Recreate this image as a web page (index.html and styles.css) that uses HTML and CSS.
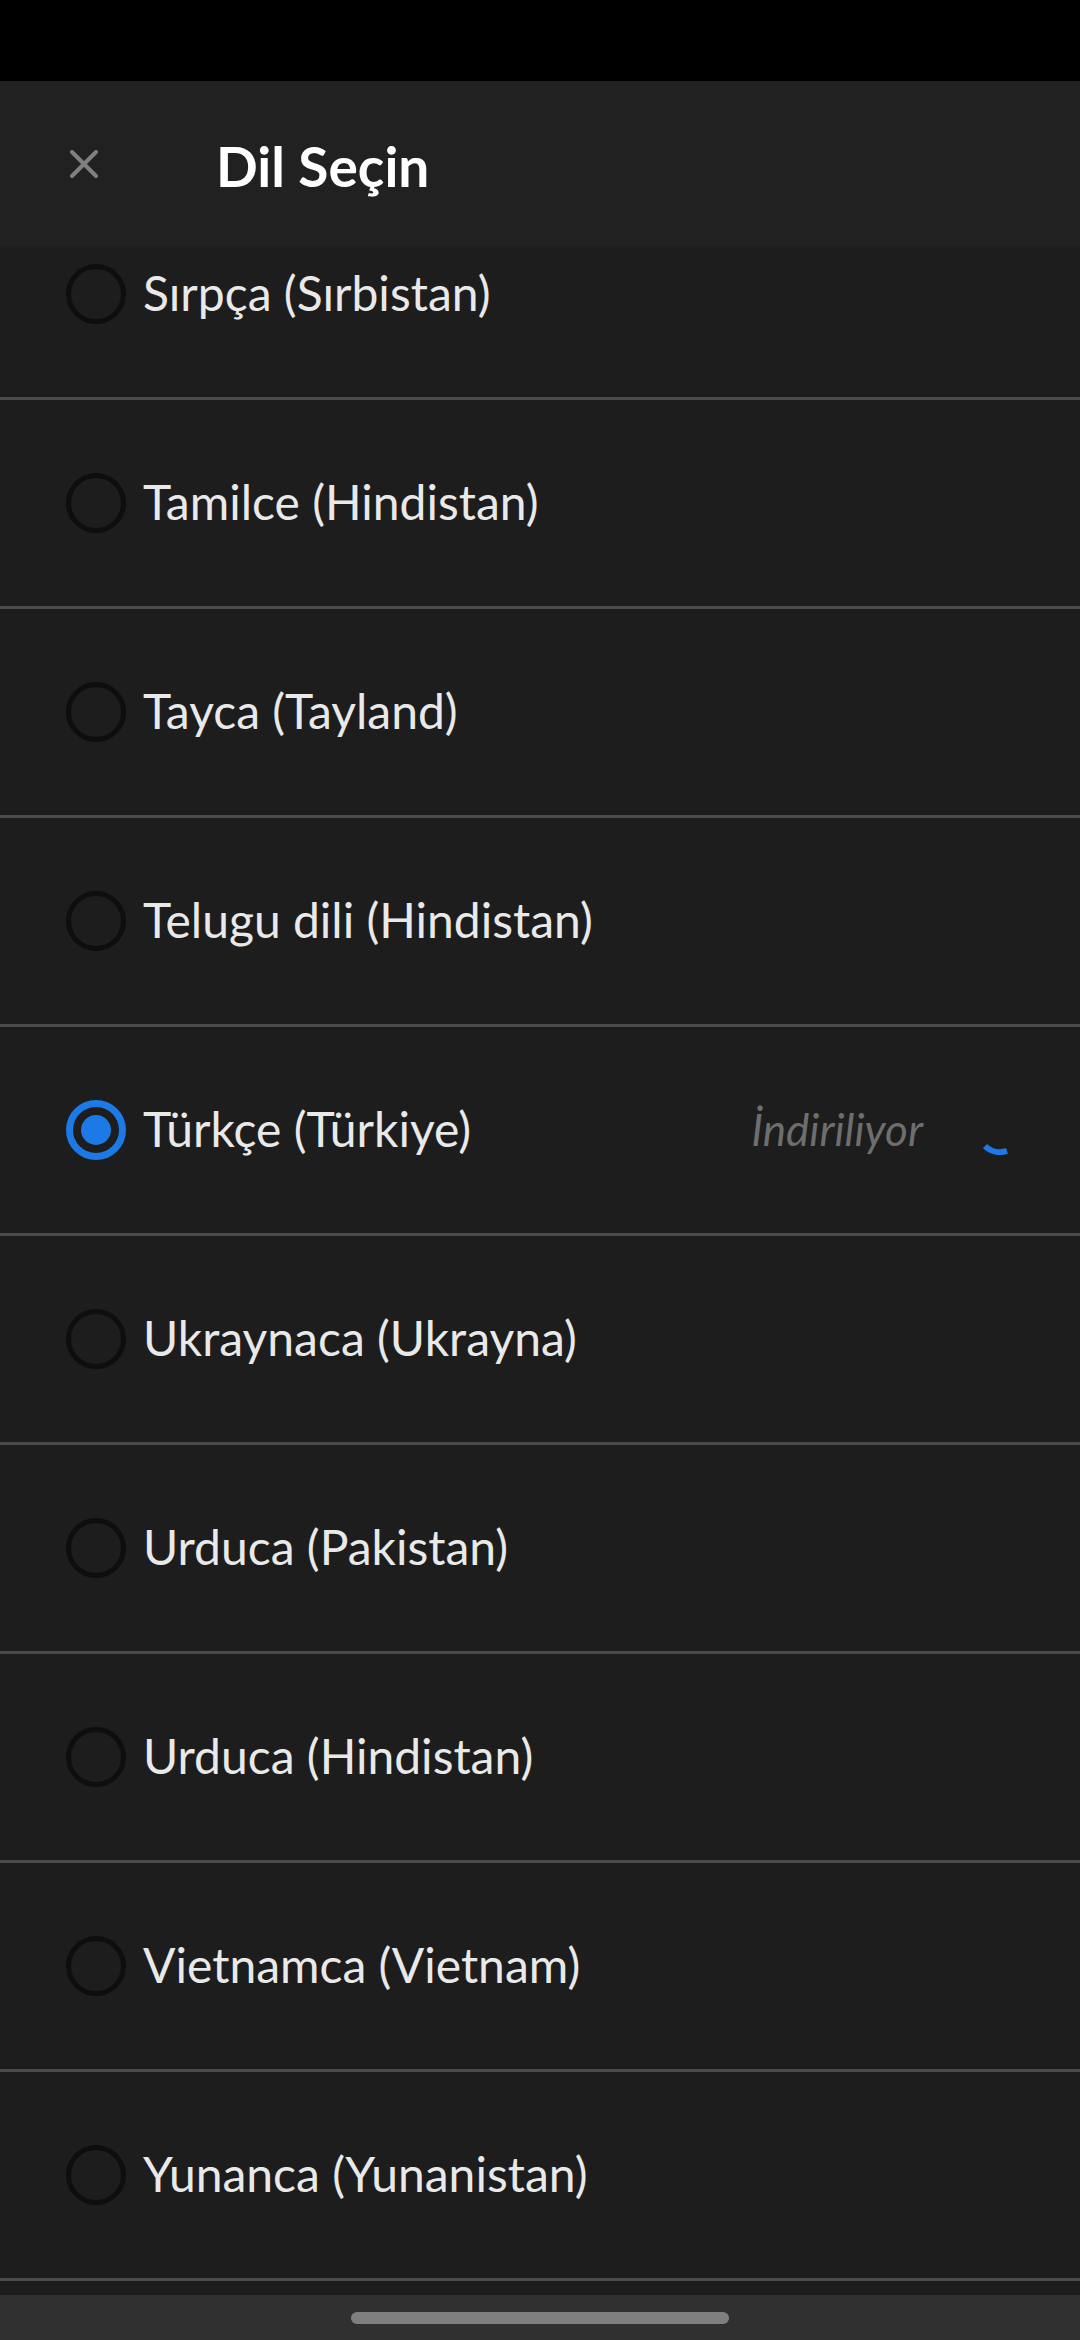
FILE: index.html
```html
<!DOCTYPE html>
<html lang="tr">
<head>
<meta charset="utf-8">
<title>Dil Seçin</title>
<link rel="stylesheet" href="styles.css">
</head>
<body>
<div class="screen">
  <div class="statusbar"></div>
  <header class="header">
    <button class="close" aria-label="Kapat">
      <svg viewBox="0 0 30 30" width="30" height="30"><path d="M3 3L27 27M27 3L3 27" stroke="#808080" stroke-width="4" stroke-linecap="round" fill="none"/></svg>
    </button>
    <h1 class="title">Dil Seçin</h1>
  </header>
  <div class="viewport">
    <ul class="list">
      <li class="row"><span class="radio"></span><span class="label">Sırpça (Sırbistan)</span></li>
      <li class="row"><span class="radio"></span><span class="label">Tamilce (Hindistan)</span></li>
      <li class="row"><span class="radio"></span><span class="label">Tayca (Tayland)</span></li>
      <li class="row"><span class="radio"></span><span class="label">Telugu dili (Hindistan)</span></li>
      <li class="row selected"><span class="radio on"><span class="dot"></span></span><span class="label">Türkçe (Türkiye)</span>
        <span class="status">İndiriliyor</span>
        <svg class="spinner" viewBox="0 0 52 52" width="52" height="52"><path d="M11 42.1 A22 22 0 0 0 33 46.9" stroke="#1b7ae6" stroke-width="6" stroke-linecap="butt" fill="none"/></svg>
      </li>
      <li class="row"><span class="radio"></span><span class="label">Ukraynaca (Ukrayna)</span></li>
      <li class="row"><span class="radio"></span><span class="label">Urduca (Pakistan)</span></li>
      <li class="row"><span class="radio"></span><span class="label">Urduca (Hindistan)</span></li>
      <li class="row"><span class="radio"></span><span class="label">Vietnamca (Vietnam)</span></li>
      <li class="row"><span class="radio"></span><span class="label">Yunanca (Yunanistan)</span></li>
      <li class="row"><span class="radio"></span><span class="label"></span></li>
    </ul>
  </div>
  <div class="navbar"><span class="handle"></span></div>
</div>
</body>
</html>
```
FILE: styles.css
```css
* { box-sizing: border-box; }
html, body { margin: 0; padding: 0; background: #1d1d1d; }
body { font-family: Lato, "Open Sans", "Noto Sans", sans-serif; }
.screen {
  width: 1080px;
  height: 2340px;
  display: flex;
  flex-direction: column;
  overflow: hidden;
  background: #1d1d1d;
}
.statusbar { height: 81px; background: #000; flex: none; }
.header {
  height: 165px;
  flex: none;
  background: #212121;
  display: flex;
  align-items: center;
  position: relative;
  z-index: 2;
}
.close {
  background: none;
  border: 0;
  padding: 0;
  margin-left: 69px;
  width: 30px;
  height: 30px;
  display: flex;
}
.title {
  margin: 0 0 0 117px;
  font-size: 55px;
  font-weight: 700;
  color: #fff;
  padding-top: 4px;
}
.viewport {
  flex: 1;
  overflow: hidden;
  background: #1d1d1d;
}
.list {
  list-style: none;
  margin: -55px 0 0 0;
  padding: 0;
}
.row {
  height: 209px;
  border-bottom: 3px solid #4b4b4b;
  display: flex;
  align-items: center;
  padding-left: 66px;
  padding-right: 54px;
}
.radio {
  width: 60px;
  height: 60px;
  border-radius: 50%;
  border: 5px solid #0e0e0e;
  flex: none;
  display: flex;
  align-items: center;
  justify-content: center;
}
.radio.on { border: 7px solid #1b7ae6; }
.dot {
  width: 30px;
  height: 30px;
  border-radius: 50%;
  background: #1b7ae6;
}
.label {
  margin-left: 17px;
  margin-bottom: 3px;
  font-size: 48px;
  color: #e9e9e9;
}
.status {
  margin-left: auto;
  margin-bottom: 3px;
  font-size: 44px;
  font-style: italic;
  color: #6e6e6e;
}
.spinner { margin-left: 51px; flex: none; }
.navbar {
  height: 45px;
  flex: none;
  background: #303030;
  display: flex;
  justify-content: center;
  padding-top: 17px;
}
.handle {
  width: 378px;
  height: 12px;
  border-radius: 6px;
  background: #7f7f7f;
}
```
